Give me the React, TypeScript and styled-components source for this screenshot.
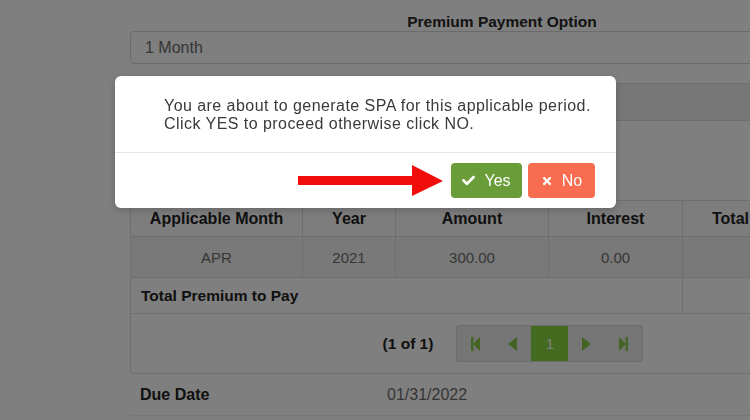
import React from "react";
import styled, { createGlobalStyle } from "styled-components";
import { FaCheck, FaTimes } from "react-icons/fa";

const GlobalStyle = createGlobalStyle`
  html, body { margin: 0; padding: 0; background: #ffffff; width: 750px; height: 420px; overflow: hidden; }
  body { font-family: "Liberation Sans", Arial, sans-serif; }
  * { box-sizing: border-box; }
`;

const Page = styled.div`
  width: 766px;
  margin-left: 130px;
  padding-top: 12px;
`;

const FormBlock = styled.div`
  width: 744px;
`;

const FieldLabel = styled.div`
  text-align: center;
  font-weight: bold;
  font-size: 15.5px;
  line-height: 19px;
  color: #262626;
`;

const SelectBox = styled.div`
  height: 33px;
  border: 1px solid #d6d6d6;
  border-radius: 4px;
  padding: 0 14px;
  display: flex;
  align-items: center;
  font-size: 16px;
  color: #6c6c6c;
`;

const ReadonlyBox = styled.div`
  margin-top: 19px;
  height: 38px;
  background: #eeeeee;
  border: 1px solid #dcdcdc;
  border-radius: 4px;
`;

const DataTable = styled.table`
  margin-top: 79px;
  width: 766px;
  border-collapse: collapse;
  table-layout: fixed;
`;

const HeadCell = styled.th<{ $w: number }>`
  width: ${(p) => p.$w}px;
  height: 36px;
  border: 1px solid #dedede;
  background: #fbfbfb;
  font-weight: bold;
  font-size: 16px;
  color: #222222;
  text-align: center;
  padding: 0;
`;

const BodyRow = styled.tr`
  background: #f2f2f2;
`;

const BodyCell = styled.td<{ $h?: number }>`
  height: ${(p) => p.$h ?? 41}px;
  border: 1px solid #dedede;
  text-align: center;
  font-size: 15px;
  color: #6e6e6e;
  padding: 0;
`;

const TotalCell = styled.td`
  height: 36px;
  border: 1px solid #dedede;
  text-align: left;
  padding: 0 0 0 10px;
  font-weight: bold;
  font-size: 15.5px;
  color: #222222;
`;

const FooterPanel = styled.div`
  width: 766px;
  height: 60px;
  border: 1px solid #dedede;
  border-top: 0;
  border-radius: 0 0 4px 4px;
  display: flex;
  align-items: center;
  justify-content: center;
  gap: 23px;
`;

const PageReport = styled.span`
  font-weight: bold;
  font-size: 15.5px;
  color: #222222;
`;

const Paginator = styled.div`
  display: flex;
  height: 37px;
  border: 1px solid #d6d6d6;
  border-radius: 3px;
  background: #ebebeb;
  overflow: hidden;
`;

const PageButton = styled.div<{ $active?: boolean }>`
  width: 37px;
  height: 100%;
  display: flex;
  align-items: center;
  justify-content: center;
  background: ${(p) => (p.$active ? "#84d640" : "transparent")};
  color: ${(p) => (p.$active ? "#ffffff" : "#86c84a")};
  font-size: 15px;
`;

const InfoRow = styled.div`
  display: grid;
  grid-template-columns: 257px 1fr;
  align-items: center;
  height: 42px;
  border-bottom: 1px solid #eeeeee;
`;

const InfoLabel = styled.span`
  padding-left: 10px;
  font-weight: bold;
  font-size: 16px;
  color: #222222;
`;

const InfoValue = styled.span`
  font-size: 16px;
  color: #6c6c6c;
`;

const Backdrop = styled.div`
  position: fixed;
  inset: 0;
  background: rgba(0, 0, 0, 0.5);
`;

const Modal = styled.div`
  position: fixed;
  left: 115px;
  top: 76px;
  width: 501px;
  background: #ffffff;
  border-radius: 6px;
  box-shadow: 0 2px 8px rgba(0, 0, 0, 0.2);
`;

const ModalBody = styled.div`
  height: 76px;
  padding: 21px 20px 0 49px;
  font-size: 16px;
  letter-spacing: 0.45px;
  line-height: 18px;
  color: #3a3a3a;
`;

const ModalFooter = styled.div`
  border-top: 1px solid #e6e6e6;
  padding: 10px 21px 10px 0;
  display: flex;
  justify-content: flex-end;
  align-items: center;
  gap: 6px;
`;

const ArrowSvg = styled.svg`
  margin-right: 2px;
`;

const ActionButton = styled.button<{ $tone: "yes" | "no"; $w: number }>`
  width: ${(p) => p.$w}px;
  height: 35px;
  border: 0;
  border-radius: 4px;
  background: ${(p) => (p.$tone === "yes" ? "#6a9d3a" : "#f86c50")};
  color: #ffffff;
  font-family: "Liberation Sans", Arial, sans-serif;
  font-size: 16px;
  display: flex;
  align-items: center;
  justify-content: center;
  gap: 9px;
  padding: 0;
`;

const FirstIcon = () => (
  <svg width="9" height="14" viewBox="0 0 9 14">
    <rect x="0" y="0" width="2.5" height="14" fill="currentColor" />
    <polygon points="9,0 9,14 2,7" fill="currentColor" />
  </svg>
);
const PrevIcon = () => (
  <svg width="9" height="14" viewBox="0 0 9 14">
    <polygon points="9,0 9,14 0,7" fill="currentColor" />
  </svg>
);
const NextIcon = () => (
  <svg width="9" height="14" viewBox="0 0 9 14">
    <polygon points="0,0 0,14 9,7" fill="currentColor" />
  </svg>
);
const LastIcon = () => (
  <svg width="9" height="14" viewBox="0 0 9 14">
    <polygon points="0,0 0,14 7,7" fill="currentColor" />
    <rect x="6.5" y="0" width="2.5" height="14" fill="currentColor" />
  </svg>
);

export default function App() {
  return (
    <>
      <GlobalStyle />
      <Page>
        <FormBlock>
          <FieldLabel>Premium Payment Option</FieldLabel>
          <SelectBox>1 Month</SelectBox>
          <ReadonlyBox />
        </FormBlock>
        <DataTable>
          <thead>
            <tr>
              <HeadCell $w={172}>Applicable Month</HeadCell>
              <HeadCell $w={93}>Year</HeadCell>
              <HeadCell $w={153}>Amount</HeadCell>
              <HeadCell $w={134}>Interest</HeadCell>
              <HeadCell $w={96}>Total</HeadCell>
              <HeadCell $w={118}></HeadCell>
            </tr>
          </thead>
          <tbody>
            <BodyRow>
              <BodyCell>APR</BodyCell>
              <BodyCell>2021</BodyCell>
              <BodyCell>300.00</BodyCell>
              <BodyCell>0.00</BodyCell>
              <BodyCell></BodyCell>
              <BodyCell></BodyCell>
            </BodyRow>
            <tr>
              <TotalCell colSpan={4}>Total Premium to Pay</TotalCell>
              <BodyCell $h={36} colSpan={2}></BodyCell>
            </tr>
          </tbody>
        </DataTable>
        <FooterPanel>
          <PageReport>(1 of 1)</PageReport>
          <Paginator>
            <PageButton><FirstIcon /></PageButton>
            <PageButton><PrevIcon /></PageButton>
            <PageButton $active>1</PageButton>
            <PageButton><NextIcon /></PageButton>
            <PageButton><LastIcon /></PageButton>
          </Paginator>
        </FooterPanel>
        <InfoRow>
          <InfoLabel>Due Date</InfoLabel>
          <InfoValue>01/31/2022</InfoValue>
        </InfoRow>
      </Page>
      <Backdrop />
      <Modal>
        <ModalBody>
          You are about to generate SPA for this applicable period.
          <br />
          Click YES to proceed otherwise click NO.
        </ModalBody>
        <ModalFooter>
          <ArrowSvg width="145" height="31" viewBox="0 0 145 31">
            <polygon points="0,11 114,11 114,0 145,16 114,31 114,20 0,20" fill="#f20d0d" />
          </ArrowSvg>
          <ActionButton $tone="yes" $w={71}>
            <FaCheck size={13} />
            Yes
          </ActionButton>
          <ActionButton $tone="no" $w={67}>
            <FaTimes size={12} />
            No
          </ActionButton>
        </ModalFooter>
      </Modal>
    </>
  );
}
